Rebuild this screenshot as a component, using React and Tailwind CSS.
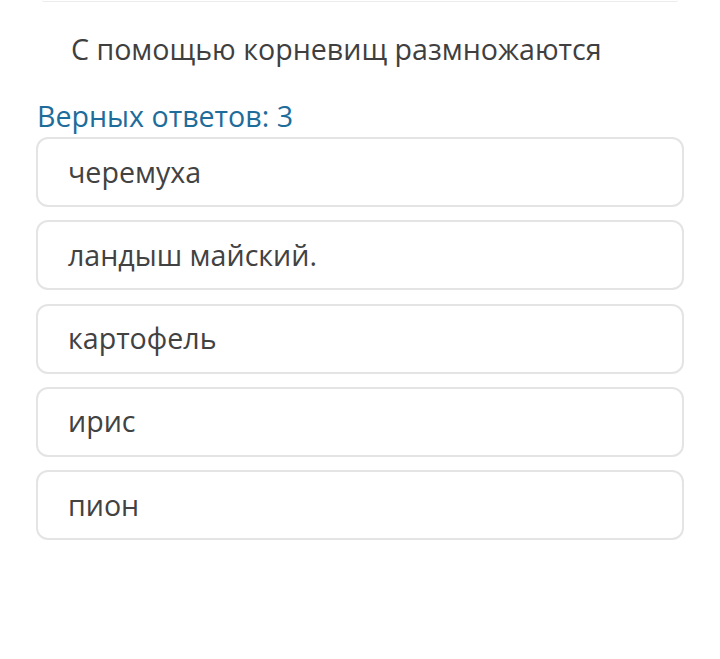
export default function App() {
  const options = ["черемуха", "ландыш майский.", "картофель", "ирис", "пион"];
  return (
    <div className="w-[720px] h-[659px] bg-white relative overflow-hidden" style={{ fontFamily: '"Open Sans", sans-serif' }}>
      <div className="mx-[42px] h-[2px] border-b border-[#ececec] rounded-b-md" />
      <div className="pl-[71px] pt-[29px] text-[28.6px] leading-[36px] text-[#3f3f3f]">
        С помощью корневищ размножаются
      </div>
      <div className="pl-[37px] pt-[31px] text-[28.6px] leading-[36px] text-[#1d6c9a]">
        Верных ответов: 3
      </div>
      <div className="px-[36px] pt-[3px] flex flex-col gap-[13.3px]">
        {options.map((o) => (
          <div key={o} className="h-[70px] border-2 border-[#e4e4e4] rounded-[12px] flex items-center pl-[30px] text-[28.6px] text-[#424242]">
            {o}
          </div>
        ))}
      </div>
    </div>
  );
}
